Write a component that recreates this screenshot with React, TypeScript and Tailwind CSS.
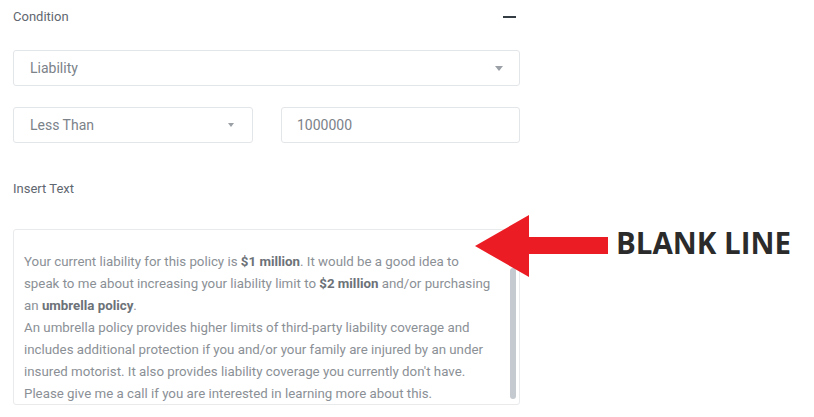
import React from "react";

function Caret({ w = 8, h = 5 }: { w?: number; h?: number }) {
  return (
    <svg width={w} height={h} viewBox={`0 0 ${w} ${h}`}>
      <polygon points={`0,0 ${w},0 ${w / 2},${h}`} fill="#9aa0a6" />
    </svg>
  );
}

function B({ children }: { children: React.ReactNode }) {
  return <b className="font-bold text-[#6c7278]">{children}</b>;
}

export default function App() {
  return (
    <div
      className="relative w-[814px] h-[417px] bg-white overflow-hidden"
      style={{ fontFamily: "Roboto, 'Liberation Sans', sans-serif" }}
    >
      <div className="w-[507px] ml-[13px] pt-[7px] flex flex-col">
        {/* section header */}
        <div className="flex items-center justify-between h-[20px]">
          <span className="text-[13px] text-[#5f6770]">Condition</span>
          <span className="block w-[13px] h-[2px] bg-[#343c44] mr-[4px]" />
        </div>

        {/* field select */}
        <div className="mt-[23px] h-[36px] border border-[#e2e6e9] rounded-[3px] flex items-center justify-between pl-[16px] pr-[16px]">
          <span className="text-[14px] text-[#7b8289]">Liability</span>
          <Caret w={8} h={5} />
        </div>

        {/* operator + value */}
        <div className="mt-[21px] flex gap-[28px]">
          <div className="w-[240px] h-[36px] border border-[#e2e6e9] rounded-[3px] flex items-center justify-between pl-[16px] pr-[18px]">
            <span className="text-[14px] text-[#7b8289]">Less Than</span>
            <Caret w={6} h={4} />
          </div>
          <div className="flex-1 h-[36px] border border-[#e2e6e9] rounded-[3px] flex items-center pl-[15px]">
            <span className="text-[14px] text-[#7b8289]">1000000</span>
          </div>
        </div>

        <div className="mt-[36px] h-[20px] flex items-center">
          <span className="text-[13px] text-[#5f6770]">Insert Text</span>
        </div>

        {/* message editor */}
        <div className="mt-[30px] h-[176px] border border-[#e8eaec] rounded-[3px] relative overflow-hidden">
          <div className="pl-[10px] text-[13.3px] leading-[22px] text-[#8b9096] whitespace-nowrap">
            <div className="h-[21px]" />
            <div>
              Your current liability for this policy is <B>$1 million</B>. It would be a good idea to
            </div>
            <div>
              speak to me about increasing your liability limit to <B>$2 million</B> and/or purchasing
            </div>
            <div>
              an <B>umbrella policy</B>.
            </div>
            <div>An umbrella policy provides higher limits of third-party liability coverage and</div>
            <div>includes additional protection if you and/or your family are injured by an under</div>
            <div>insured motorist. It also provides liability coverage you currently don't have.</div>
            <div>Please give me a call if you are interested in learning more about this.</div>
          </div>
          <div className="absolute right-[3px] top-[38px] w-[6px] h-[131px] rounded-[3px] bg-[#c4cacf]" />
        </div>
      </div>

      {/* annotation */}
      <svg className="absolute left-0 top-0" width="814" height="417">
        <polygon
          points="475,246 529,215 529,237 608,237 608,254 529,254 529,277"
          fill="#ec1c24"
        />
      </svg>
      <div
        className="absolute left-[616px] top-[225px] text-[29.5px] font-bold leading-[36px] text-[#2b2b2b]"
        style={{ fontFamily: "'Open Sans', 'DejaVu Sans', sans-serif" }}
      >
        BLANK LINE
      </div>
    </div>
  );
}
